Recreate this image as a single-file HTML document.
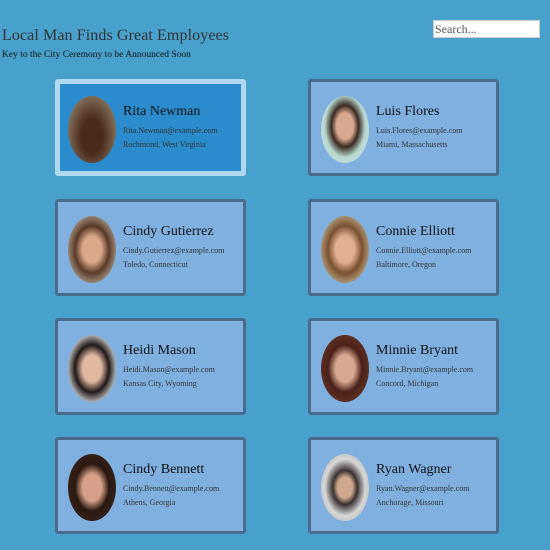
<!DOCTYPE html>
<html><head><style>
*{margin:0;padding:0;box-sizing:border-box}
body{width:550px;height:550px;background:#48a0cc;font-family:"Liberation Serif",serif;position:relative;overflow:hidden;color:#222}
h1{position:absolute;left:2px;top:27px;font-size:16px;font-weight:normal;color:#333;white-space:nowrap;letter-spacing:0.1px}
h2{position:absolute;left:2px;top:50px;font-size:9.5px;font-weight:normal;color:#111;white-space:nowrap}
.search{position:absolute;left:433px;top:20px;width:107px;height:18px;background:#fff;border:1px solid #ccc;font-size:12px;color:#555;padding:1px 1px;line-height:15px}
.card{position:absolute;width:191px;height:97px;background:#80b0e0;border:3px solid #4b6b8c;border-radius:3px}
.card.hi{background:#2a8ccc;border:5px solid #b0d8f0}
.ph{position:absolute;left:10px;top:14px;width:48px;height:67px;border-radius:50%;overflow:hidden}
.hi .ph{left:8px;top:12px}
.nm{position:absolute;left:65px;top:22px;font-size:14px;color:#111;white-space:nowrap}
.hi .nm{left:63px;top:20px}
.em,.lc{position:absolute;left:65px;font-size:8px;color:#333;white-space:nowrap}
.em{top:44px}.lc{top:58px}
.hi .em{left:63px;top:42px}.hi .lc{left:63px;top:56px}
</style></head><body>
<h1>Local Man Finds Great Employees</h1>
<h2>Key to the City Ceremony to be Announced Soon</h2>
<div class="search">Search...</div>

<div class="card hi" style="left:55px;top:79px"><div class="ph" style="background:radial-gradient(ellipse at 50% 60%,#4a2a1a 30%,#6a5040 55%,#8a7a60 80%)"></div><div class="nm">Rita Newman</div><div class="em">Rita.Newman@example.com</div><div class="lc">Rochmond, West Virginia</div></div>
<div class="card" style="left:308px;top:79px"><div class="ph" style="background:radial-gradient(ellipse at 50% 45%,#d8a890 25%,#3a2a20 40%,#b8d8d0 60%,#d0e0e0 90%)"></div><div class="nm">Luis Flores</div><div class="em">Luis.Flores@example.com</div><div class="lc">Miami, Massachusetts</div></div>

<div class="card" style="left:55px;top:199px"><div class="ph" style="background:radial-gradient(ellipse at 50% 50%,#d8a888 28%,#5a3a28 50%,#c0b8a8 85%)"></div><div class="nm">Cindy Gutierrez</div><div class="em">Cindy.Gutierrez@example.com</div><div class="lc">Toledo, Connecticut</div></div>
<div class="card" style="left:308px;top:199px"><div class="ph" style="background:radial-gradient(ellipse at 50% 50%,#e0b090 28%,#7a5030 50%,#c8c0a0 85%)"></div><div class="nm">Connie Elliott</div><div class="em">Connie.Elliott@example.com</div><div class="lc">Baltimore, Oregon</div></div>

<div class="card" style="left:55px;top:318px"><div class="ph" style="background:radial-gradient(ellipse at 50% 50%,#e0b8a0 28%,#201818 50%,#f0f0f0 80%)"></div><div class="nm">Heidi Mason</div><div class="em">Heidi.Mason@example.com</div><div class="lc">Kansas City, Wyoming</div></div>
<div class="card" style="left:308px;top:318px"><div class="ph" style="background:radial-gradient(ellipse at 50% 50%,#d8a890 28%,#4a2018 50%,#6a3a2a 85%)"></div><div class="nm">Minnie Bryant</div><div class="em">Minnie.Bryant@example.com</div><div class="lc">Concord, Michigan</div></div>

<div class="card" style="left:55px;top:437px"><div class="ph" style="background:radial-gradient(ellipse at 50% 50%,#d8a088 28%,#2a1810 50%,#3a2820 85%)"></div><div class="nm">Cindy Bennett</div><div class="em">Cindy.Bennett@example.com</div><div class="lc">Athens, Georgia</div></div>
<div class="card" style="left:308px;top:437px"><div class="ph" style="background:radial-gradient(ellipse at 50% 50%,#d0a890 22%,#3a3030 36%,#d8d8d8 60%,#a8a8a8 90%)"></div><div class="nm">Ryan Wagner</div><div class="em">Ryan.Wagner@example.com</div><div class="lc">Anchorage, Missouri</div></div>
</body></html>
